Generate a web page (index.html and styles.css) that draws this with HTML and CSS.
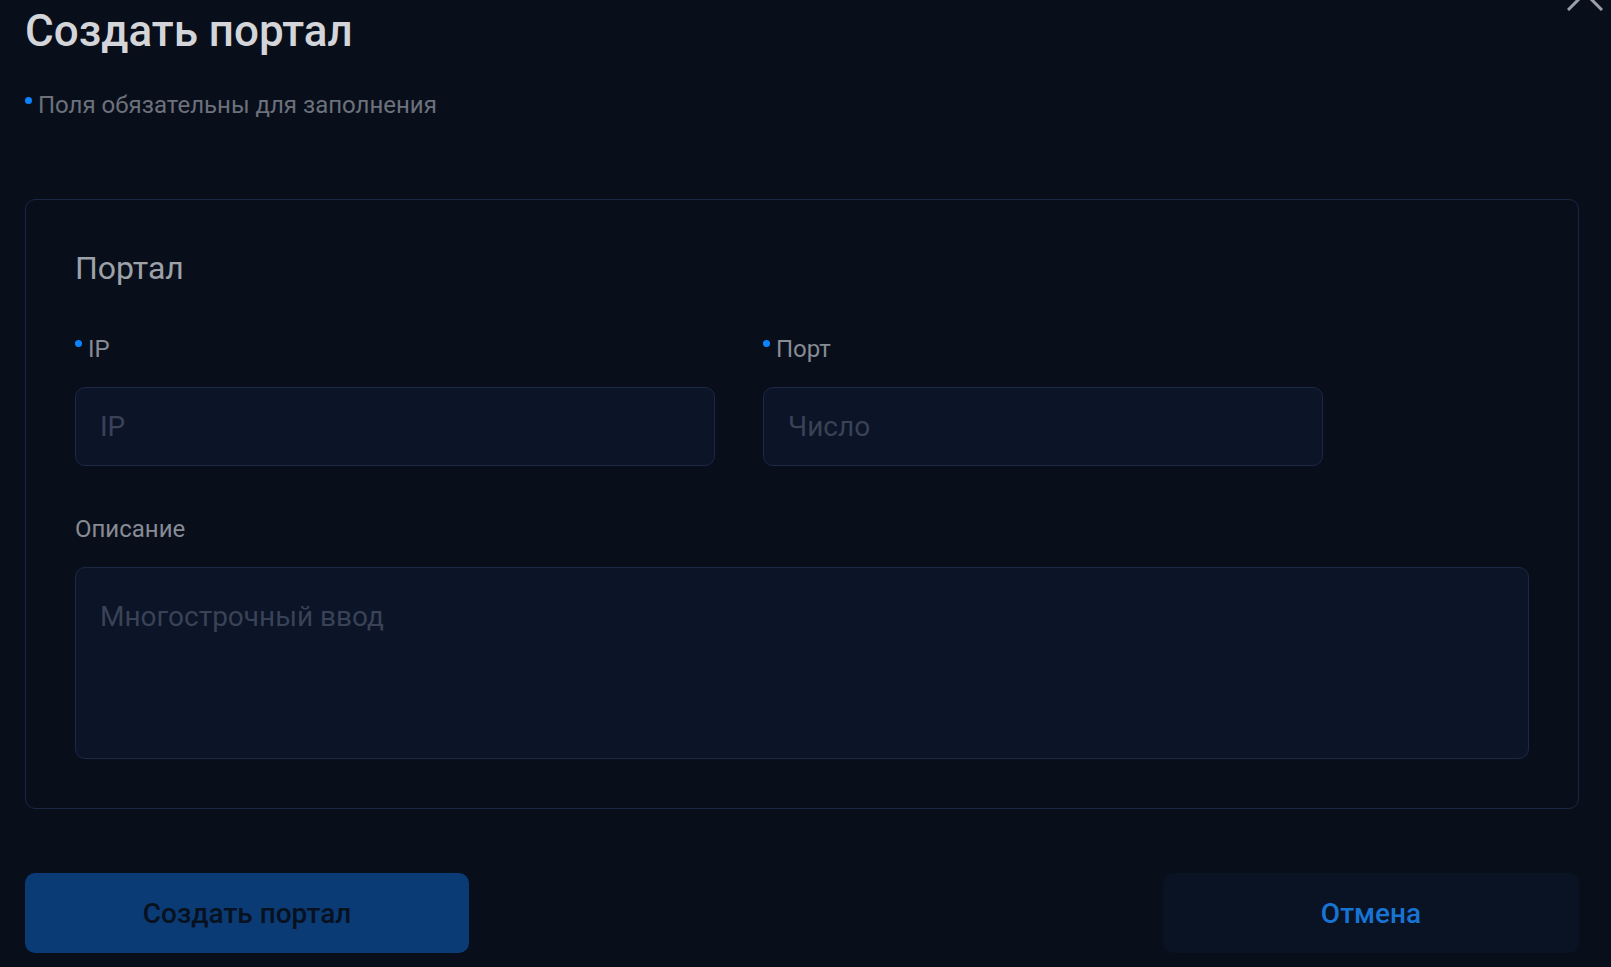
FILE: index.html
```html
<!DOCTYPE html>
<html>

<head>
    <meta charset="UTF-8">
    <title>Создать портал</title>
    <link rel="stylesheet" href="styles.css">
</head>

<body>
    <div class="modal">
        
        <button class="close" aria-label="Закрыть">
            <svg width="36" height="36" viewBox="0 0 36 36">
                <path d="M1 1 L35 35 M35 1 L1 35" stroke="#9aa0aa" stroke-width="3" fill="none" />
            </svg>
        </button>
        <h1 class="title">Создать портал</h1>
        <p class="hint"><span class="dot"></span>Поля обязательны для заполнения</p>

        <div class="card">
            <h2 class="card_title">Портал</h2>
            <div class="row">
                <div class="field">
                    <label class="label"><span class="dot"></span>IP</label>
                    <input class="input" type="text" placeholder="IP">
                </div>
                <div class="field">
                    <label class="label"><span class="dot"></span>Порт</label>
                    <input class="input" type="text" placeholder="Число">
                </div>
            </div>
            <div class="field">
                <label class="label">Описание</label>
                <textarea class="input textarea" placeholder="Многострочный ввод"></textarea>
            </div>
        </div>

        <div class="actions">
            <button class="btn btn_primary">Создать портал</button>
            <button class="btn btn_cancel">Отмена</button>
        </div>
    </div>
</body>

</html>
```

FILE: styles.css
```css
* {
    margin: 0;
    padding: 0;
    box-sizing: border-box;
}
:root {
    --bg: #090e1b;
    --line: #1b2642;
    --field: #0c1427;
    --field-line: #1c2845;
    --blue: #0a84ff;
}
body {
    background-color: var(--bg);
    font-family: Roboto, "Liberation Sans", sans-serif;
    overflow: hidden;
}
.modal {
    position: relative;
    padding: 6px 32px 0 25px;
}
/* крестик торчит только нижней половиной */
.close {
    position: absolute;
    top: -25px;
    right: 8px;
    width: 36px;
    height: 36px;
    border: none;
    background: none;
}
.close svg {
    display: block;
}
.title {
    font-size: 44px;
    line-height: 50px;
    font-weight: 500;
    color: #d3d5d9;
}
.hint {
    margin-top: 35px;
    font-size: 24px;
    line-height: 28px;
    color: #6c717b;
}
/* синяя точка обязательного поля */
.dot {
    display: inline-block;
    width: 7px;
    height: 7px;
    margin-right: 6px;
    border-radius: 50%;
    background-color: var(--blue);
    vertical-align: top;
    margin-top: 6px;
}
.card {
    margin-top: 80px;
    padding: 49px 49px 49px;
    border: 1px solid var(--line);
    border-radius: 10px;
}
.card_title {
    font-size: 32px;
    line-height: 38px;
    font-weight: 400;
    color: #9da1a8;
}
.row {
    display: grid;
    grid-template-columns: 640px 560px;
    column-gap: 48px;
    margin-top: 48px;
    margin-bottom: 49px;
}
.field {
    display: flex;
    flex-direction: column;
    gap: 24px;
}
.label {
    font-size: 24px;
    line-height: 28px;
    color: #868b94;
}
.label .dot {
    margin-top: 5px;
}
.input {
    height: 79px;
    padding: 0 24px;
    border: 1px solid var(--field-line);
    border-radius: 10px;
    background-color: var(--field);
    font-family: inherit;
    font-size: 28px;
    color: #c9ccd2;
    outline: none;
}
.input::placeholder {
    color: #394256;
}
.textarea {
    height: 192px;
    padding: 32px 24px;
    line-height: 34px;
    resize: none;
}
.actions {
    display: flex;
    justify-content: space-between;
    margin-top: 64px;
}
.btn {
    height: 80px;
    border: none;
    border-radius: 10px;
    font-family: inherit;
    font-size: 28px;
    font-weight: 500;
}
.btn_primary {
    width: 444px;
    background-color: #0a3b74;
    color: #08111f;
}
.btn_cancel {
    width: 416px;
    background-color: #0a1324;
    color: #1873d3;
}
```
